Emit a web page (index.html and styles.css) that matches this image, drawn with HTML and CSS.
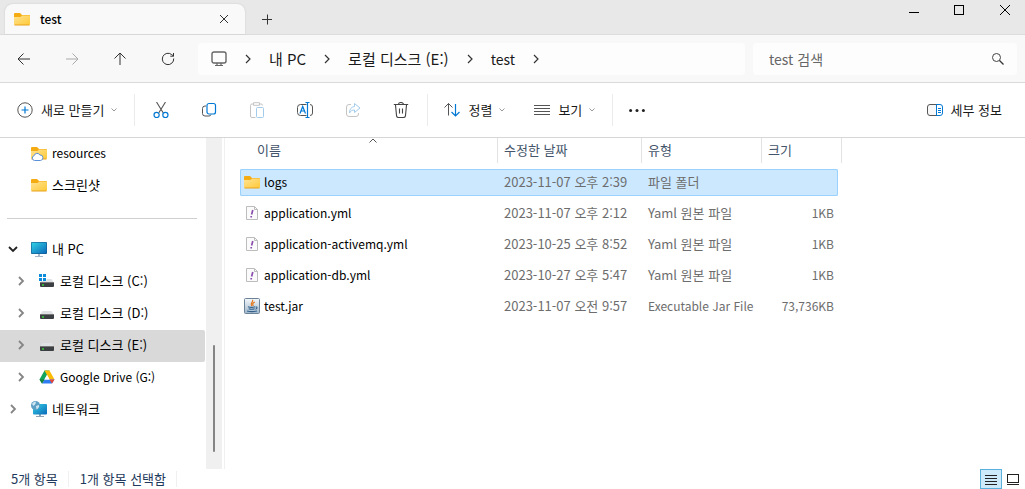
FILE: index.html
```html
<!DOCTYPE html>
<html lang="ko">
<head>
<meta charset="utf-8">
<title>test</title>
<link rel="stylesheet" href="styles.css">
</head>
<body>
<svg class="defs" aria-hidden="true">
  <defs>
    <linearGradient id="gold" x1="0" y1="0" x2="1" y2="1"><stop offset="0" stop-color="#ffe394"/><stop offset="1" stop-color="#ffc937"/></linearGradient>
    <linearGradient id="screen" x1="0" y1="0" x2="1" y2="1"><stop offset="0" stop-color="#33d3e6"/><stop offset="1" stop-color="#0b68b8"/></linearGradient>
    <linearGradient id="steel" x1="0" y1="0" x2="0" y2="1"><stop offset="0" stop-color="#f4f8fb"/><stop offset="1" stop-color="#9fb6cb"/></linearGradient>
    <symbol id="folder" viewBox="0 0 16 16">
      <path d="M0 3a1 1 0 0 1 1-1h5l2 2h7a1 1 0 0 1 1 1v4H0z" fill="#f5ab12"/>
      <path d="M0 6h6.500l1.500-1.500h7a1 1 0 0 1 1 1V13a1 1 0 0 1-1 1H1a1 1 0 0 1-1-1z" fill="url(#gold)"/>
      <path d="M.5 14h15" stroke="#e8a21b"/>
    </symbol>
    <symbol id="drive" viewBox="0 0 16 16">
      <path d="M3.500 6h9l2.500 4H1z" fill="#dfe2e5"/>
      <path d="M1 9.500h14V13a1 1 0 0 1-1 1H2a1 1 0 0 1-1-1z" fill="#3c3f42"/>
      <path d="M1 9.500h14" stroke="#777"/>
      <path d="M3 12h2" stroke="#35d23c" stroke-width="1.500"/>
    </symbol>
    <symbol id="yaml" viewBox="0 0 16 16">
      <path d="M2.500 1.500h8l3 3v10h-11z" fill="#fbfbfb" stroke="#bcbcbc"/>
      <path d="M10.500 1.500v3h3" fill="none" stroke="#bcbcbc"/>
      <path d="M8.800 5 7.600 9.500M7.200 11v1.500" stroke="#8a4fae" stroke-width="1.700"/>
    </symbol>
    <symbol id="right" viewBox="0 0 16 16"><path d="m6 4 4 4-4 4" fill="none" stroke="currentColor" stroke-width="var(--w,1.200)"/></symbol>
    <symbol id="down" viewBox="0 0 8 8"><path d="m1.500 2.500 2.500 2.500 2.500-2.500" fill="none" stroke="#999"/></symbol>
  </defs>
</svg>

<header class="titlebar">
  <div class="tab">
    <svg class="icon"><use href="#folder"/></svg>
    <span class="tab-title">test</span>
    <button class="plain" aria-label="탭 닫기"><svg class="icon" viewBox="0 0 16 16"><path d="m4 4 8 8m0-8-8 8" stroke="#333"/></svg></button>
  </div>
  <button class="plain new-tab" aria-label="새 탭"><svg class="icon" viewBox="0 0 16 16"><path d="M3 8.500h10M8.500 3.500v10" stroke="#333"/></svg></button>
  <div class="window-buttons">
    <button class="plain" aria-label="최소화"><svg class="icon" viewBox="0 0 16 16"><path d="M4 10.500h10" stroke="#000"/></svg></button>
    <button class="plain" aria-label="최대화"><svg class="icon" viewBox="0 0 16 16"><rect x="3.500" y="3.500" width="9" height="9" fill="none" stroke="#000"/></svg></button>
    <button class="plain" aria-label="닫기"><svg class="icon" viewBox="0 0 16 16"><path d="m3 3 10 10m0-10L3 13" stroke="#000"/></svg></button>
  </div>
</header>

<div class="navbar">
  <div class="nav-buttons">
    <button class="plain" aria-label="뒤로"><svg class="icon" viewBox="0 0 16 16"><path d="M14 8H2m5.500-5.500L2 8l5.500 5.500" fill="none" stroke="#333"/></svg></button>
    <button class="plain" aria-label="앞으로"><svg class="icon" viewBox="0 0 16 16"><path d="M2 8h12M8.500 2.500 14 8l-5.500 5.500" fill="none" stroke="#aaa"/></svg></button>
    <button class="plain" aria-label="위로"><svg class="icon" viewBox="0 0 16 16"><path d="M8 14V2M2.500 7.500 8 2l5.500 5.500" fill="none" stroke="#333"/></svg></button>
    <button class="plain" aria-label="새로 고침"><svg class="icon" viewBox="0 0 16 16"><path d="M13.700 7.500a5.700 5.700 0 1 1-2-3.900L13.500 5M13.500 2v3.200h-3.200" fill="none" stroke="#333"/></svg></button>
  </div>
  <nav class="address" aria-label="주소">
    <svg class="icon" viewBox="0 0 16 16"><rect x="1" y="1" width="14" height="11" rx="2" fill="none" stroke="#666" stroke-width="1.400"/><path d="M6 12v2.500m4-2.500v2.500M4 14.500h8" stroke="#666" stroke-width="1.200"/></svg>
    <svg class="crumb-arrow"><use href="#right"/></svg>
    <a href="#">내 PC</a>
    <svg class="crumb-arrow"><use href="#right"/></svg>
    <a href="#">로컬 디스크 (E:)</a>
    <svg class="crumb-arrow"><use href="#right"/></svg>
    <a href="#" class="latin">test</a>
    <svg class="crumb-arrow"><use href="#right"/></svg>
  </nav>
  <label class="search">
    <input type="text" placeholder="test 검색" aria-label="test 검색">
    <svg class="icon" viewBox="0 0 16 16"><circle cx="6.500" cy="6.500" r="4" fill="none" stroke="#444"/><path d="m9.500 9.500 4 4" stroke="#333" stroke-width="1.300"/></svg>
  </label>
</div>

<div class="toolbar">
  <button class="plain command first">
    <svg class="icon" viewBox="0 0 16 16"><circle cx="8" cy="8" r="7.200" fill="none" stroke="#555"/><path d="M4.500 8h7M8 4.500v7" stroke="#0078d4" stroke-width="1.200"/></svg>
    <span>새로 만들기</span><svg class="caret"><use href="#down"/></svg>
  </button>
  <div class="tools">
    <button class="plain" aria-label="잘라내기"><svg class="icon" viewBox="0 0 16 16"><path d="m3.500 0 6.800 11M12.500 0 5.700 11" stroke="#555" stroke-width="1.100"/><g fill="none" stroke="#0078d4" stroke-width="1.200"><circle cx="3.600" cy="13" r="2.600"/><circle cx="12.400" cy="13" r="2.600"/></g></svg></button>
    <button class="plain" aria-label="복사"><svg class="icon" viewBox="0 0 16 16"><path d="M5 4H4a2.500 2.500 0 0 0-2.500 2.500v5A2.500 2.500 0 0 0 4 14h4a2 2 0 0 0 2-1.500" fill="none" stroke="#555"/><rect x="6" y="1.500" width="8.500" height="10.500" rx="2" fill="#fff" stroke="#0078d4" stroke-width="1.200"/></svg></button>
    <button class="plain" aria-label="붙여넣기"><svg class="icon" viewBox="0 0 16 16"><path d="M6.500 15.500H3A1.500 1.500 0 0 1 1.500 14V3.500A1.500 1.500 0 0 1 3 2h1.500m6 0H12a1.500 1.500 0 0 1 1.500 1.500M4.500.700h6v2.600h-6z" fill="none" stroke="#c4c4c4"/><rect x="7.500" y="5.500" width="7" height="10" rx="1" fill="#fff" stroke="#a3cbea"/></svg></button>
    <button class="plain" aria-label="이름 바꾸기"><svg class="icon wide" viewBox="0 0 18 16"><path d="M10.500 2.500h-6A3 3 0 0 0 1.500 5.500v5a3 3 0 0 0 3 3h6M14 2.500a2.500 2.500 0 0 1 2.500 2.500v6a2.500 2.500 0 0 1-2.500 2.500" fill="none" stroke="#555"/><path d="M4 11.500 6.700 4.500 9.500 11.500M5 9h3.500M9.500.500h4m-4 15h4M11.500.500v15" fill="none" stroke="#0078d4" stroke-width="1.200"/></svg></button>
    <button class="plain" aria-label="공유"><svg class="icon" viewBox="0 0 16 16"><path d="M6 2.500H4A2.500 2.500 0 0 0 1.500 5v7A2.500 2.500 0 0 0 4 14.500h7a2.500 2.500 0 0 0 2.500-2.500v-1" fill="none" stroke="#c4c4c4"/><path d="M9.500 1.500 15 6l-5.500 4.500V8C7 8 5.500 9 4.500 11c0-3.500 1.500-6 5-6.500z" fill="none" stroke="#a3cbea" stroke-linejoin="round"/></svg></button>
    <button class="plain" aria-label="삭제"><svg class="icon" viewBox="0 0 16 16"><path d="M.8 2.500h14.400M5.500 2.500a2.500 2 0 0 1 5 0M2.500 3l1 10.500a2 2 0 0 0 2 2h5a2 2 0 0 0 2-2l1-10.500M6.500 6.500v5m3-5v5" fill="none" stroke="#444" stroke-width="1.100"/></svg></button>
  </div>
  <button class="plain command">
    <svg class="icon" viewBox="0 0 16 16"><path d="M4.500 13.500v-12M.500 5.500l4-4 4 4" fill="none" stroke="#555"/><path d="M11.500 2v12m-4-4 4 4 4-4" fill="none" stroke="#0078d4" stroke-width="1.200"/></svg>
    <span>정렬</span><svg class="caret"><use href="#down"/></svg>
  </button>
  <button class="plain command view">
    <svg class="icon" viewBox="0 0 16 16"><path d="M0 3.500h16M0 6.500h16M0 9.500h16M0 12.500h16" stroke="#555"/></svg>
    <span>보기</span><svg class="caret"><use href="#down"/></svg>
  </button>
  <button class="plain more" aria-label="더 보기"><svg class="icon" viewBox="0 0 16 16"><g fill="#222"><circle cx="1.600" cy="8.500" r="1.500"/><circle cx="8" cy="8.500" r="1.500"/><circle cx="14.400" cy="8.500" r="1.500"/></g></svg></button>
  <button class="plain command details">
    <svg class="icon" viewBox="0 0 16 16"><path d="M10 2.500H3A2.500 2.500 0 0 0 .500 5v6A2.500 2.500 0 0 0 3 13.500h7" fill="#f8f8f8" stroke="#555"/><path d="M9.500 2.500H13A2.500 2.500 0 0 1 15.500 5v6a2.500 2.500 0 0 1-2.500 2.500H9.500zM11 6.500h3m-3 2h3m-3 2h3" fill="none" stroke="#0078d4"/></svg>
    <span>세부 정보</span>
  </button>
</div>

<div class="body">
  <nav class="sidebar" aria-label="탐색 창">
    <ul class="tree">
      <li><span class="twist"></span><a href="#" class="latin"><svg class="icon" viewBox="0 0 16 16"><use href="#folder" width="16" height="16"/><path d="M3.500 15.500a2.500 2.500 0 0 1-.3-4.900 3 3 0 0 1 5.600-.6 2.500 2.500 0 0 1 .7 5.500z" fill="#fff" stroke="#5b8fd8"/></svg>resources</a></li>
      <li><span class="twist"></span><a href="#"><svg class="icon"><use href="#folder"/></svg>스크린샷</a></li>
    </ul>
    <hr>
    <ul class="tree">
      <li><button class="plain twist open" aria-label="접기"><svg class="icon" viewBox="0 0 16 16"><path d="m4 6 4 4 4-4" fill="none" stroke="#222" stroke-width="1.800"/></svg></button><a href="#"><svg class="icon" viewBox="0 0 16 16"><path d="M7 12h2v3H7zM4 15h8v1H4z" fill="#a9b8c9"/><rect x="0" y="1" width="16" height="12" rx="1" fill="#14588c"/><rect x=".6" y="1.600" width="14.800" height="10.800" fill="url(#screen)"/></svg>내 PC</a></li>
      <li class="child"><button class="plain twist" aria-label="펼치기"><svg class="icon"><use href="#right"/></svg></button><a href="#"><svg class="icon" viewBox="0 0 16 16"><use href="#drive" width="16" height="16"/><path d="M0 1h7.500v7H0z" fill="#fff"/><path d="M0 1h3v3H0zM4 1h3v3H4zM0 5h3v3H0zM4 5h3v3H4z" fill="#0a8bdc"/></svg>로컬 디스크 (C:)</a></li>
      <li class="child"><button class="plain twist" aria-label="펼치기"><svg class="icon"><use href="#right"/></svg></button><a href="#"><svg class="icon"><use href="#drive"/></svg>로컬 디스크 (D:)</a></li>
      <li class="child current"><button class="plain twist" aria-label="펼치기"><svg class="icon"><use href="#right"/></svg></button><a href="#"><svg class="icon"><use href="#drive"/></svg>로컬 디스크 (E:)</a></li>
      <li class="child"><button class="plain twist" aria-label="펼치기"><svg class="icon"><use href="#right"/></svg></button><a href="#" class="latin"><svg class="icon" viewBox="0 0 16 16"><path d="M5.500 1.500h5L8 6 3 14.500.500 10.500z" fill="#12a45c"/><path d="M5.500 1.500h5l5 9h-5z" fill="#fbbc05"/><path d="M5.500 10.500h10L13 14.500H3z" fill="#2f7cf0"/><path d="M10.500 10.500h5L13 14.500z" fill="#ea4335"/><path d="M5.500 10.500 3 14.500.500 10.500z" fill="#188038"/><path d="M8 6 5.500 10.500h5z" fill="#fff"/></svg>Google Drive (G:)</a></li>
      <li><button class="plain twist" aria-label="펼치기"><svg class="icon"><use href="#right"/></svg></button><a href="#"><svg class="icon" viewBox="0 0 16 16"><path d="M8 13h2v2H8zM5 15h8v1H5z" fill="#8fa3b5"/><rect x="2" y="3" width="14" height="10.500" rx="1" fill="url(#screen)"/><circle cx="4.500" cy="4.500" r="4.500" fill="#5d9fc5"/><path d="M1 3c1-2 3-2.500 4-2.300L4.500 3 2.500 5zM5 5l3-1c.5 2-1 4-2.500 4.300z" fill="#cfe6f0"/></svg>네트워크</a></li>
    </ul>
  </nav>
  <div class="scroll-track"><div class="scroll-thumb"></div></div>
  <main class="files">
    <table>
      <colgroup><col class="c-name"><col class="c-date"><col class="c-type"><col class="c-size"></colgroup>
      <thead>
        <tr>
          <th><div class="head name-head">이름<svg class="sort" viewBox="0 0 8 5"><path d="m.500 4.500 3.500-3.500 3.500 3.500" fill="none" stroke="#555"/></svg></div></th>
          <th><div class="head">수정한 날짜</div></th>
          <th><div class="head">유형</div></th>
          <th><div class="head last">크기</div></th>
        </tr>
      </thead>
      <tbody>
        <tr class="selected"><td><div class="file"><svg class="icon"><use href="#folder"/></svg>logs</div></td><td>2023-11-07 오후 2:39</td><td>파일 폴더</td><td></td></tr>
        <tr><td><div class="file"><svg class="icon"><use href="#yaml"/></svg>application.yml</div></td><td>2023-11-07 오후 2:12</td><td>Yaml 원본 파일</td><td>1KB</td></tr>
        <tr><td><div class="file"><svg class="icon"><use href="#yaml"/></svg>application-activemq.yml</div></td><td>2023-10-25 오후 8:52</td><td>Yaml 원본 파일</td><td>1KB</td></tr>
        <tr><td><div class="file"><svg class="icon"><use href="#yaml"/></svg>application-db.yml</div></td><td>2023-10-27 오후 5:47</td><td>Yaml 원본 파일</td><td>1KB</td></tr>
        <tr><td><div class="file"><svg class="icon" viewBox="0 0 16 16"><rect x=".5" y=".5" width="15" height="15" rx="1" fill="url(#steel)" stroke="#6c8299"/><path d="M8.500 1.800c1.500 2-3 3-.8 6.200M10.800 4c-2.500 1.200-2.500 2-1.500 4" fill="none" stroke="#e4761b" stroke-width="1.200"/><path d="M4 8.700c2 .8 5 .8 7 0M4.700 10.700c1.800.6 4.200.6 6 0M3 13c3 .8 7 .8 10 0M11.500 9c2-.5 2 1.800 0 2.200" fill="none" stroke="#33618c" stroke-width="1.100"/></svg>test.jar</div></td><td>2023-11-07 오전 9:57</td><td class="latin">Executable Jar File</td><td>73,736KB</td></tr>
      </tbody>
    </table>
  </main>
</div>

<footer class="status">
  <span>5개 항목</span>
  <span>1개 항목 선택함</span>
  <div class="view-switch">
    <button class="plain on" aria-label="자세히"><svg class="icon" viewBox="0 0 16 16"><path d="M2 4.500h12M2 7.500h12M2 10.500h12M2 13.500h12" stroke="#222"/></svg></button>
    <button class="plain" aria-label="큰 아이콘"><svg class="icon" viewBox="0 0 16 16"><rect x="2.500" y="3.500" width="11" height="8" fill="#fff" stroke="#222"/><path d="M2 13.500h12" stroke="#222"/></svg></button>
  </div>
</footer>
</body>
</html>
```
FILE: styles.css
```css
* { box-sizing: border-box; }

body {
  margin: 0;
  height: 100vh;
  display: flex;
  flex-direction: column;
  overflow: hidden;
  background: #fff;
  color: #000;
  font: 13px/16px "Noto Sans CJK KR", sans-serif;
}

a { color: inherit; text-decoration: none; }

.latin { font-size: 12px; }

.defs { position: absolute; width: 0; height: 0; }

.icon { width: 16px; height: 16px; flex: none; display: block; }
.icon.wide { width: 18px; }
.caret { width: 8px; height: 8px; flex: none; }

.plain {
  display: flex;
  align-items: center;
  justify-content: center;
  padding: 0;
  border: 0;
  background: none;
  color: inherit;
  font: inherit;
}

/* Title bar */
.titlebar {
  display: flex;
  height: 35px;
  padding-left: 5px;
  background: #e8e8e8;
  border-bottom: 1px solid #dcdcdc;
}
.tab {
  display: flex;
  align-items: center;
  gap: 10px;
  width: 240px;
  margin-top: 4px;
  padding: 0 13px 0 9px;
  background: #f9f9f9;
  border-radius: 8px 8px 0 0;
  box-shadow: 0 0 2px #c8c8c8;
}
.tab-title { flex: 1; font-size: 12px; font-weight: 500; }
.new-tab { width: 44px; padding-top: 4px; }
.window-buttons { display: flex; height: 20px; margin-left: auto; padding-right: 12px; gap: 30px; }

/* Navigation row */
.navbar {
  display: flex;
  align-items: center;
  height: 48px;
  padding-right: 8px;
  background: #f8f8f8;
  border-bottom: 1px solid #dadada;
}
.nav-buttons { display: flex; margin-right: 6px; }
.nav-buttons button { width: 48px; height: 32px; }
.address, .search {
  display: flex;
  align-items: center;
  height: 32px;
  background: #fdfdfd;
  border-radius: 4px;
  font-size: 14px;
  color: #1a1a1a;
}
.address { flex: 1; padding-left: 13px; font-size: 15px; }
.address .latin { font-size: 14px; }
.crumb-arrow { width: 16px; height: 16px; margin: 0 13px; flex: none; color: #333; }
.search { width: 264px; margin-left: 8px; padding: 0 11px 0 16px; }
.search input {
  flex: 1;
  min-width: 0;
  padding: 0;
  border: 0;
  background: none;
  font: inherit;
}
.search input::placeholder { color: #666; opacity: 1; }

/* Command bar */
.toolbar {
  display: flex;
  align-items: center;
  height: 55px;
  padding: 0 23px 0 17px;
  border-bottom: 1px solid #d6d6d6;
  color: #1a1a1a;
}
.command { gap: 8px; }
.command .caret { margin-left: -2px; }
.tools {
  display: flex;
  height: 32px;
  margin: 0 16px;
  padding: 0 2px;
  border: solid #ebebeb;
  border-width: 0 1px;
}
.tools button { width: 48px; }
.view { margin-left: 28px; }
.more { width: 48px; height: 32px; margin-left: 16px; border-left: 1px solid #ebebeb; }
.details { margin-left: auto; }

/* Panes */
.body { display: flex; flex: 1; min-height: 0; }
.sidebar { width: 206px; flex: none; }
.tree { margin: 0; padding: 0; list-style: none; }
.tree li { display: flex; align-items: center; height: 32px; padding: 0 0 2px 5px; margin-right: 1px; }
.tree .child { padding-left: 13px; }
.tree a { display: flex; align-items: center; gap: 5px; }
.twist { width: 16px; margin-right: 10px; color: #858585; --w: 1.800; }
.current { background: #d9d9d9; border-radius: 0 2px 2px 0; }
.sidebar hr { margin: 16px 9px 15px 7px; border: 0; border-top: 1px solid #cfcfcf; }
.scroll-track {
  display: flex;
  justify-content: center;
  align-items: flex-end;
  width: 16px;
  padding-bottom: 17px;
  background: #f0f0f0;
}
.scroll-thumb { width: 2px; height: 107px; border-radius: 1px; background: #858585; }
.files { flex: 1; margin-left: 2px; padding-left: 15px; border-left: 1px solid #f0f0f0; }

/* File list */
table { width: 598px; margin-top: -4px; table-layout: fixed; border-spacing: 0 4px; }
.c-name { width: 258px; }
.c-date { width: 144px; }
.c-type { width: 120px; }
th { height: 27px; padding: 0; vertical-align: top; font-weight: 400; text-align: left; color: #44546a; }
.head { position: relative; height: 25px; padding: 4px 0 0 6px; border-right: 1px solid #e2e2e2; }
.name-head { padding-left: 17px; }
.head.last { margin-right: -4px; }
.sort { position: absolute; left: 50%; top: 0; width: 8px; height: 5px; }
td {
  height: 27px;
  padding: 0 4px 2px 6px;
  color: #6d6d6d;
  white-space: nowrap;
}
td:first-child { padding-left: 4px; color: #000; font-size: 12px; }
td:last-child { text-align: right; font-size: 12px; }
.selected { outline: 1px solid #99d1ff; outline-offset: -1px; border-radius: 2px; }
.selected td { background-color: #cce8ff; }
.file { display: flex; align-items: center; gap: 4px; }

/* Status bar */
.status { display: flex; align-items: center; height: 20px; padding: 0 1px 0 11px; color: #1e395b; }
.status span { height: 16px; padding-right: 10px; margin-right: 11px; border-right: 1px solid #f0f0f0; }
.view-switch { display: flex; align-self: stretch; margin-left: auto; }
.view-switch button { width: 22px; }
.view-switch .on { background: #cdeafa; border: 1px solid #5ab0dc; }
```
